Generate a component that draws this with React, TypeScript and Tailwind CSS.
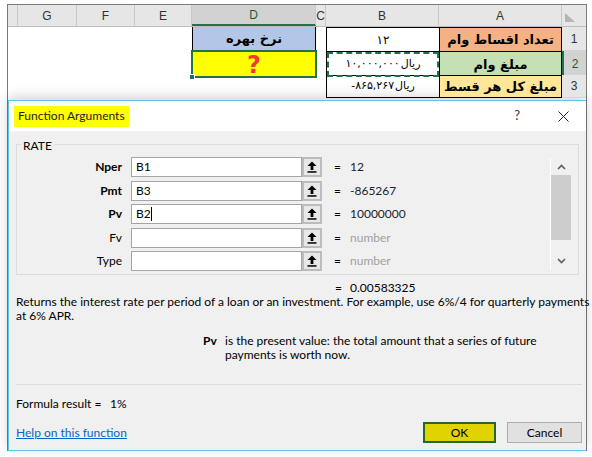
import React from 'react';

const cols = 'grid grid-cols-[10px_59px_58px_57px_124px_10px_113px_123px_24px]';
const fa = "[font-family:'DejaVu_Sans',sans-serif]";
const ui = "[font-family:Lato,'Liberation_Sans',sans-serif]";

const args = [
  { label: 'Nper', bold: true, value: 'B1', result: '12' },
  { label: 'Pmt', bold: true, value: 'B3', result: '-865267' },
  { label: 'Pv', bold: true, value: 'B2', result: '10000000', caret: true },
  { label: 'Fv', bold: false, value: '', result: 'number', muted: true },
  { label: 'Type', bold: false, value: '', result: 'number', muted: true },
];

function SheetHeader() {
  const letters = ['', 'G', 'F', 'E', 'D', 'C', 'B', 'A'];
  return (
    <div className={`${cols} h-[22px] bg-[#e6e6e6] border-b border-[#bdbdbd] text-[12px] text-[#333] [font-family:'Liberation_Sans',sans-serif]`}>
      {letters.map((l, i) => (
        <div
          key={i}
          className={
            l === 'D'
              ? 'flex items-center justify-center border-r border-[#c8c8c8] bg-[#d2d2d2] border-b-2 border-b-[#217346] text-[#1d5c37]'
              : 'flex items-center justify-center border-r border-[#c8c8c8]'
          }
        >
          {l}
        </div>
      ))}
      <div className="flex items-end pl-[3px] pb-[4px]">
        <svg width="10" height="9" viewBox="0 0 10 9">
          <path d="M0 0 L10 9 H0 Z" fill="#b4b4b4" />
        </svg>
      </div>
    </div>
  );
}

function Sheet() {
  return (
    <div className={`${fa} text-black`}>
      <SheetHeader />
      {/* row 1 */}
      <div className={`${cols} h-[24px]`}>
        <div />
        <div />
        <div />
        <div />
        <div className="flex items-center justify-center bg-[#b4c6e7] border-l border-r border-black text-[13px] font-bold" dir="rtl">
          نرخ بهره
        </div>
        <div />
        <div className="flex items-center justify-center border-l border-t border-black text-[12px]">۱۲</div>
        <div className="flex items-center justify-center bg-[#f4b183] border-l border-r border-t border-black text-[13px] font-bold" dir="rtl">
          تعداد اقساط وام
        </div>
        <div className="flex items-center justify-center bg-[#e6e6e6] border-b border-[#d4d4d4] text-[12px] text-[#333] [font-family:'Liberation_Sans',sans-serif]">1</div>
      </div>
      {/* row 2 */}
      <div className={`${cols} h-[24px]`}>
        <div />
        <div />
        <div />
        <div />
        <div className="relative flex items-center justify-center bg-[#ffff00]">
          <div className="absolute -inset-[1px] border-2 border-[#217346]" />
          <div className="absolute -left-[3px] -bottom-[3px] w-[6px] h-[6px] bg-[#217346] border border-white" />
          <span className="text-[24px] leading-none font-bold text-[#ef3a3a] [font-family:'DejaVu_Sans',sans-serif] pt-[2px]">?</span>
        </div>
        <div />
        <div className="relative flex items-center justify-center gap-[1px] border-l border-t border-black text-[11px]">
          <div className="absolute inset-0 border-2 border-dashed border-[#217346]" />
          <span>۱۰,۰۰۰,۰۰۰</span>
          <span>ریال</span>
        </div>
        <div className="flex items-center justify-center bg-[#c5e0b4] border-l border-r border-t border-black text-[13px] font-bold" dir="rtl">
          مبلغ وام
        </div>
        <div className="flex items-center justify-center bg-[#d2d2d2] border-l-2 border-[#217346] border-b border-b-[#d4d4d4] text-[12px] text-[#1d5c37] [font-family:'Liberation_Sans',sans-serif]">2</div>
      </div>
      {/* row 3 */}
      <div className={`${cols} h-[23px]`}>
        <div />
        <div />
        <div />
        <div />
        <div />
        <div />
        <div className="flex items-center justify-center gap-[1px] border-l border-t border-b border-black text-[11px]">
          <span>-۸۶۵,۲۶۷</span>
          <span>ریال</span>
        </div>
        <div className="flex items-center justify-center bg-[#ffe699] border border-black text-[13px] font-bold" dir="rtl">
          مبلغ کل هر قسط
        </div>
        <div className="flex items-center justify-center bg-[#e6e6e6] border-b border-[#d4d4d4] text-[12px] text-[#333] [font-family:'Liberation_Sans',sans-serif]">3</div>
      </div>
    </div>
  );
}

function RefButton() {
  return (
    <div className="w-[20px] h-[20px] border-2 border-[#bcbcbc] bg-[#e8e8e8] flex items-center justify-center">
      <svg width="10" height="12" viewBox="0 0 10 12">
        <path d="M5 0.5 L9.5 5 H6.4 V9 H3.6 V5 H0.5 Z" fill="#000" />
        <rect x="0.5" y="10.2" width="9" height="1.5" fill="#000" />
      </svg>
    </div>
  );
}

function Chevron({ down }: { down?: boolean }) {
  return (
    <svg width="9" height="6" viewBox="0 0 9 6">
      <polyline
        points={down ? '1,1 4.5,4.5 8,1' : '1,5 4.5,1.5 8,5'}
        fill="none"
        stroke="#606060"
        strokeWidth="1.7"
      />
    </svg>
  );
}

function ArgsBox() {
  return (
    <div className="relative mt-[13px] mx-[7px] h-[131px] border border-[#dcdcdc] flex pt-[12px]">
      <span className="absolute left-[4px] -top-[6px] px-[2px] bg-[#f0f0f0] leading-[14px]">RATE</span>
      <div className="flex-1 flex flex-col gap-[3.5px]">
        {args.map((a) => (
          <div key={a.label} className="flex items-center h-[20px]">
            <div className={a.bold ? 'w-[105px] text-right font-bold' : 'w-[105px] text-right'}>{a.label}</div>
            <div className="ml-[9px] w-[171px] h-[20px] border border-[#a5a5a5] bg-white pl-[4px] flex items-center">
              {a.value}
              {a.caret && <span className="w-px h-[14px] bg-black" />}
            </div>
            <RefButton />
            <div className="ml-[12px] w-[16px]">=</div>
            <div className={a.muted ? 'text-[#a0a0a0]' : 'text-[#1c1c2c]'}>{a.result}</div>
          </div>
        ))}
      </div>
      <div className="mr-[7px] mt-[1px] w-[21px] h-[112px] border-l border-white flex flex-col items-center">
        <div className="h-[17px] flex items-center">
          <Chevron />
        </div>
        <div className="w-full h-[65px] bg-[#cdcdcd]" />
        <div className="flex-1 flex items-end pb-[6px]">
          <Chevron down />
        </div>
      </div>
    </div>
  );
}

function Dialog() {
  return (
    <div className={`${ui} mt-[2px] h-[351px] flex flex-col bg-[#f0f0f0] border-l border-t border-b border-[#62c4ea] text-[12px] text-black shadow-[0_-3px_12px_rgba(0,0,0,0.18)]`}>
      <div className="h-[30px] bg-white flex items-center shrink-0">
        <div className="ml-[5px] h-[21px] px-[4px] bg-[#ffff00] flex items-center text-[12px] text-[#222]">Function Arguments</div>
        <div className="ml-auto mr-[38px] text-[13px] text-[#333]">?</div>
        <div className="mr-[17px]">
          <svg width="11" height="11" viewBox="0 0 11 11">
            <path d="M0.5 0.5 L10.5 10.5 M10.5 0.5 L0.5 10.5" stroke="#222" strokeWidth="1" />
          </svg>
        </div>
      </div>
      <ArgsBox />
      <div className="mt-[6px] h-[14px] leading-[14px] flex pl-[326px]">
        <span className="w-[15px]">=</span>
        <span>0.00583325</span>
      </div>
      <div className="pl-[7px] leading-[14px] whitespace-nowrap">
        <div>Returns the interest rate per period of a loan or an investment. For example, use 6%/4 for quarterly payments</div>
        <div>at 6% APR.</div>
      </div>
      <div className="mt-[11px] flex pl-[194px] leading-[13.5px]">
        <div className="w-[22px] font-bold">Pv</div>
        <div>
          <div>is the present value: the total amount that a series of future</div>
          <div>payments is worth now.</div>
        </div>
      </div>
      <div className="mt-[23px] ml-[7px] mr-[4px] h-px bg-[#dcdcdc]" />
      <div className="mt-[12px] pl-[7px] h-[14px] leading-[14px] flex">
        <span className="w-[94px]">Formula result =</span>
        <span>1%</span>
      </div>
      <div className="mt-[11px] flex items-center pl-[7px] pr-[4px]">
        <span className="text-[#0066cc] underline">Help on this function</span>
        <div className="ml-auto w-[73px] h-[21px] bg-[#e0d300] border-2 border-[#1f6b2c] flex items-center justify-center">OK</div>
        <div className="ml-[11px] w-[75px] h-[21px] bg-[#e1e1e1] border border-[#adadad] flex items-center justify-center">Cancel</div>
      </div>
    </div>
  );
}

export default function App() {
  return (
    <div className="w-[592px] h-[457px] bg-white overflow-hidden pt-[4px] pl-[7px]">
      <div className="w-[580px] h-[447px] border-l border-t border-r border-[#7a7a7a]">
        <Sheet />
        <Dialog />
      </div>
    </div>
  );
}
